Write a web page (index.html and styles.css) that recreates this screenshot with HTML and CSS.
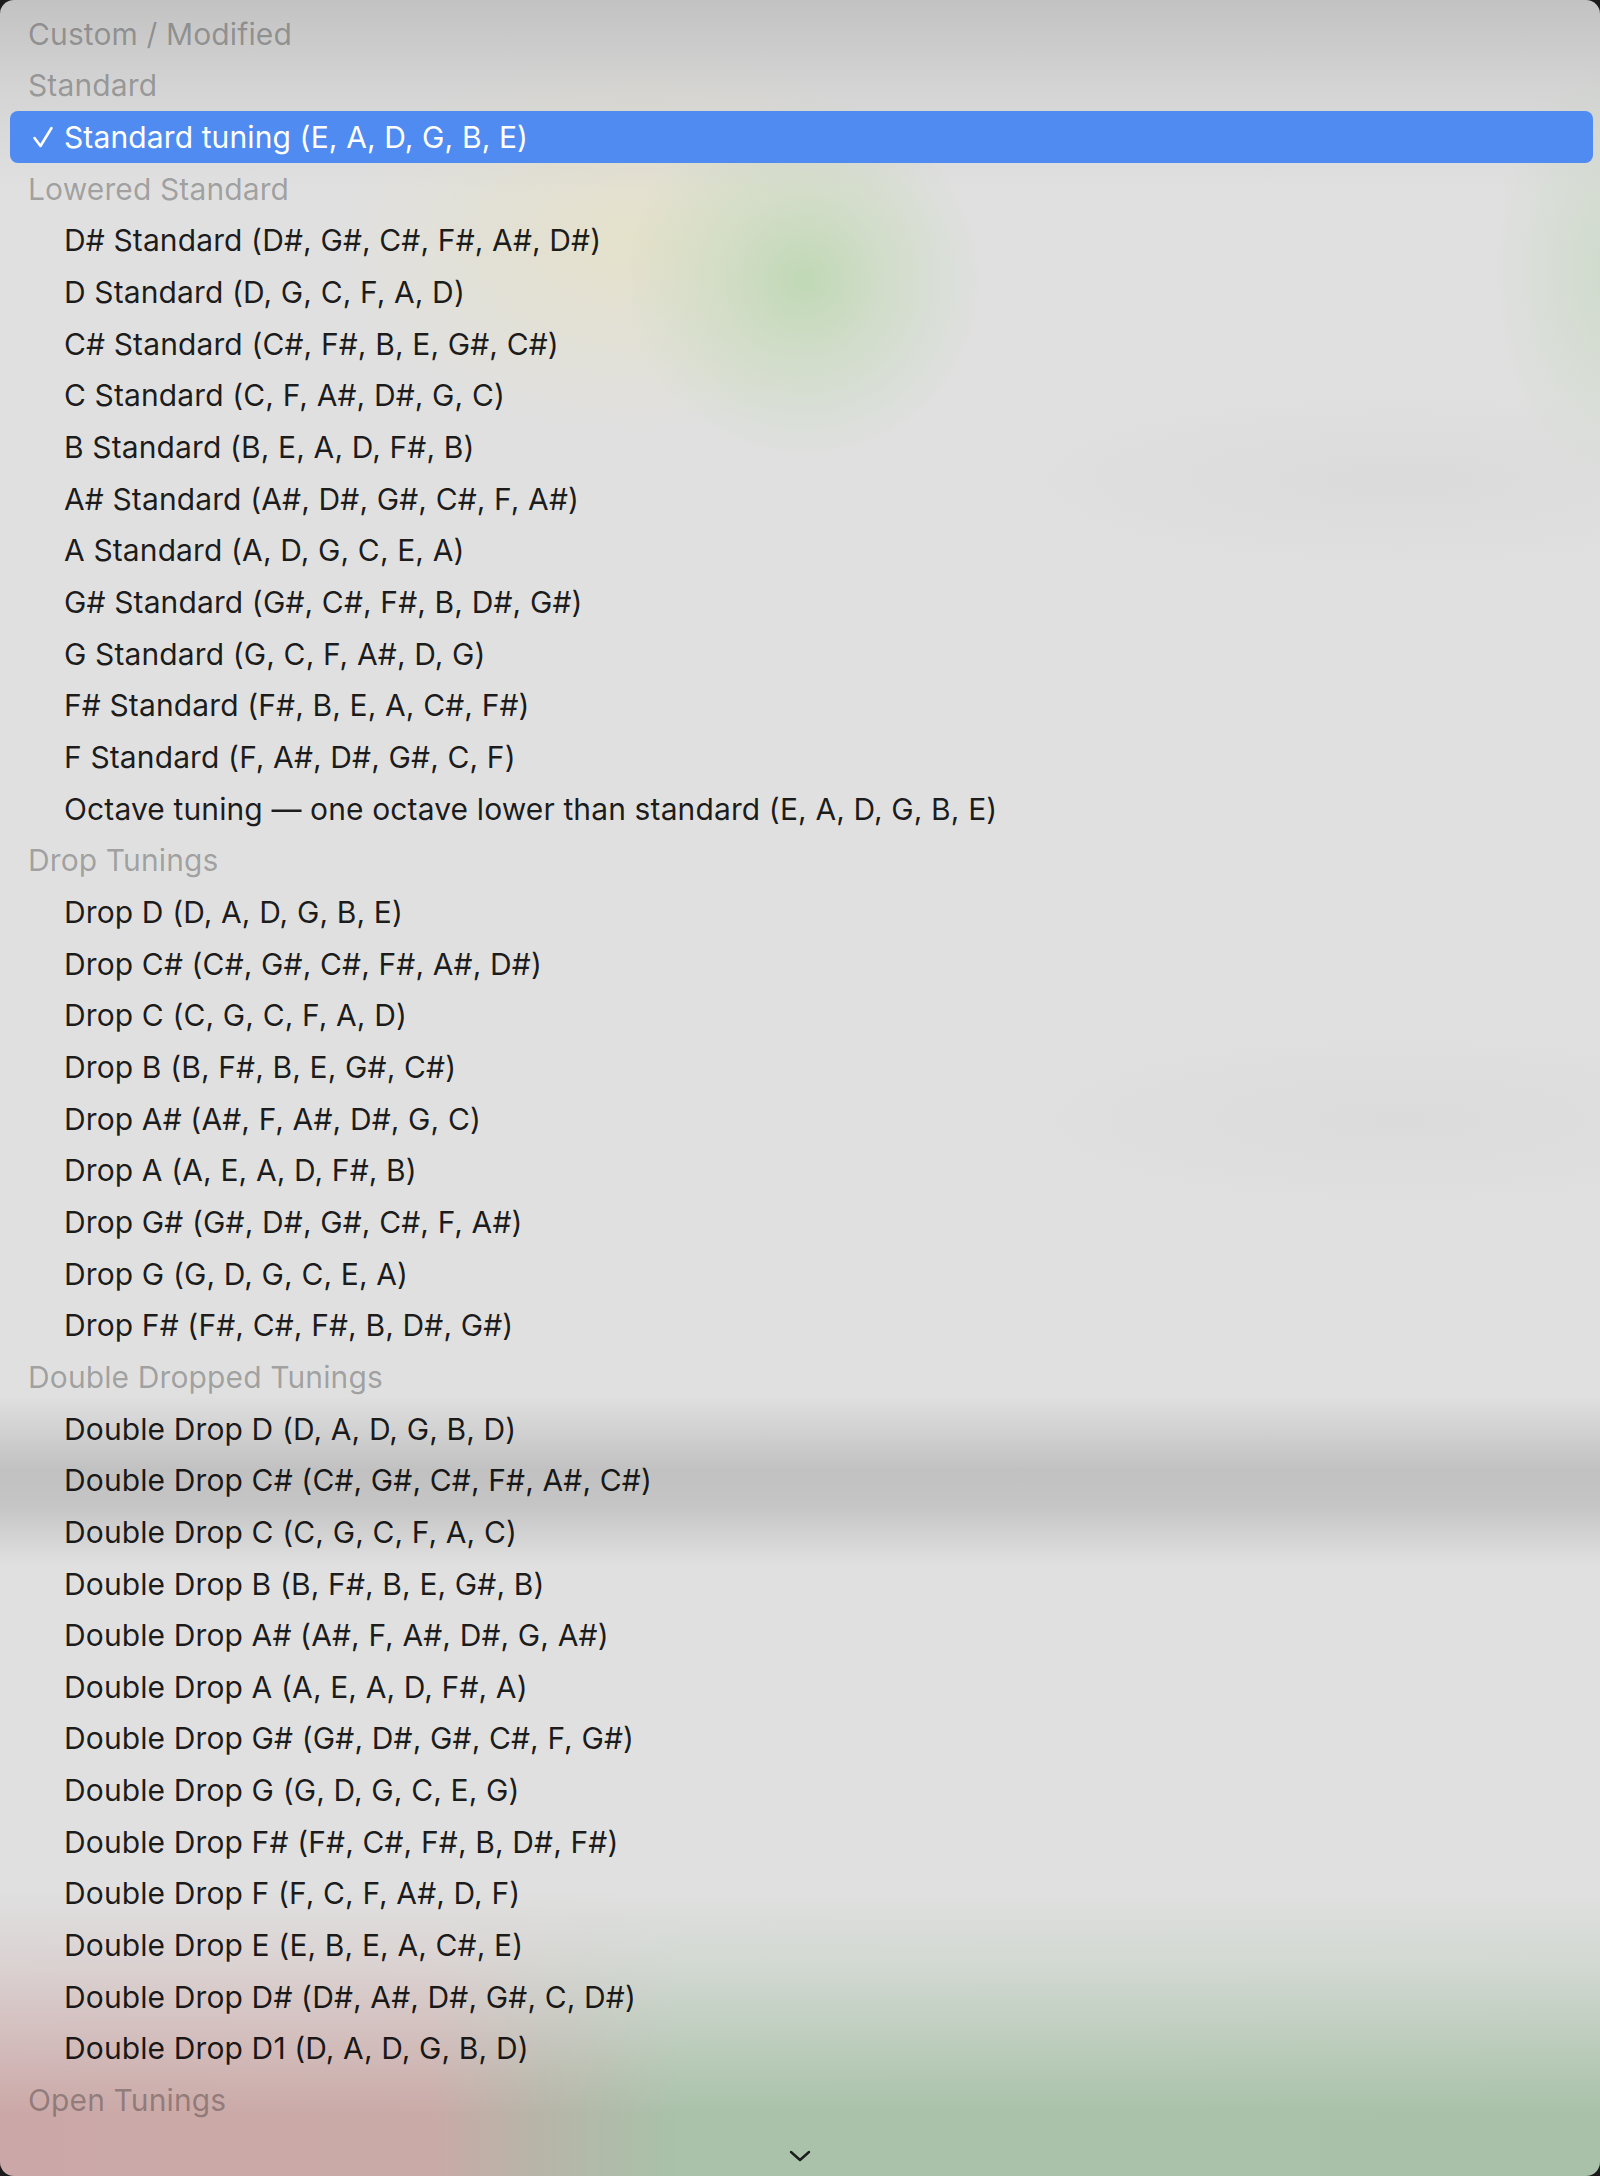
FILE: index.html
```html
<!DOCTYPE html>
<html lang="en">
<head>
<meta charset="utf-8">
<title>Tuning menu</title>
<link rel="stylesheet" href="styles.css">
</head>
<body>
<div class="menu">
  <ul class="list">
    <li class="row header">Custom / Modified</li>
    <li class="row header">Standard</li>
    <li class="row item selected"><span class="mark"><svg width="22" height="24" viewBox="0 0 22 24"><path d="M2.5 13 L8.5 21 L19.5 3" fill="none" stroke="#fff" stroke-width="2.6" stroke-linecap="round" stroke-linejoin="round"/></svg></span>Standard tuning (E, A, D, G, B, E)</li>
    <li class="row header">Lowered Standard</li>
    <li class="row item"><span class="mark"></span>D# Standard (D#, G#, C#, F#, A#, D#)</li>
    <li class="row item"><span class="mark"></span>D Standard (D, G, C, F, A, D)</li>
    <li class="row item"><span class="mark"></span>C# Standard (C#, F#, B, E, G#, C#)</li>
    <li class="row item"><span class="mark"></span>C Standard (C, F, A#, D#, G, C)</li>
    <li class="row item"><span class="mark"></span>B Standard (B, E, A, D, F#, B)</li>
    <li class="row item"><span class="mark"></span>A# Standard (A#, D#, G#, C#, F, A#)</li>
    <li class="row item"><span class="mark"></span>A Standard (A, D, G, C, E, A)</li>
    <li class="row item"><span class="mark"></span>G# Standard (G#, C#, F#, B, D#, G#)</li>
    <li class="row item"><span class="mark"></span>G Standard (G, C, F, A#, D, G)</li>
    <li class="row item"><span class="mark"></span>F# Standard (F#, B, E, A, C#, F#)</li>
    <li class="row item"><span class="mark"></span>F Standard (F, A#, D#, G#, C, F)</li>
    <li class="row item"><span class="mark"></span>Octave tuning — one octave lower than standard (E, A, D, G, B, E)</li>
    <li class="row header">Drop Tunings</li>
    <li class="row item"><span class="mark"></span>Drop D (D, A, D, G, B, E)</li>
    <li class="row item"><span class="mark"></span>Drop C# (C#, G#, C#, F#, A#, D#)</li>
    <li class="row item"><span class="mark"></span>Drop C (C, G, C, F, A, D)</li>
    <li class="row item"><span class="mark"></span>Drop B (B, F#, B, E, G#, C#)</li>
    <li class="row item"><span class="mark"></span>Drop A# (A#, F, A#, D#, G, C)</li>
    <li class="row item"><span class="mark"></span>Drop A (A, E, A, D, F#, B)</li>
    <li class="row item"><span class="mark"></span>Drop G# (G#, D#, G#, C#, F, A#)</li>
    <li class="row item"><span class="mark"></span>Drop G (G, D, G, C, E, A)</li>
    <li class="row item"><span class="mark"></span>Drop F# (F#, C#, F#, B, D#, G#)</li>
    <li class="row header">Double Dropped Tunings</li>
    <li class="row item"><span class="mark"></span>Double Drop D (D, A, D, G, B, D)</li>
    <li class="row item"><span class="mark"></span>Double Drop C# (C#, G#, C#, F#, A#, C#)</li>
    <li class="row item"><span class="mark"></span>Double Drop C (C, G, C, F, A, C)</li>
    <li class="row item"><span class="mark"></span>Double Drop B (B, F#, B, E, G#, B)</li>
    <li class="row item"><span class="mark"></span>Double Drop A# (A#, F, A#, D#, G, A#)</li>
    <li class="row item"><span class="mark"></span>Double Drop A (A, E, A, D, F#, A)</li>
    <li class="row item"><span class="mark"></span>Double Drop G# (G#, D#, G#, C#, F, G#)</li>
    <li class="row item"><span class="mark"></span>Double Drop G (G, D, G, C, E, G)</li>
    <li class="row item"><span class="mark"></span>Double Drop F# (F#, C#, F#, B, D#, F#)</li>
    <li class="row item"><span class="mark"></span>Double Drop F (F, C, F, A#, D, F)</li>
    <li class="row item"><span class="mark"></span>Double Drop E (E, B, E, A, C#, E)</li>
    <li class="row item"><span class="mark"></span>Double Drop D# (D#, A#, D#, G#, C, D#)</li>
    <li class="row item"><span class="mark"></span>Double Drop D1 (D, A, D, G, B, D)</li>
    <li class="row header">Open Tunings</li>
  </ul>
  <div class="scroll-arrow"><svg width="22" height="12" viewBox="0 0 22 12"><path d="M2 2 L11 10 L20 2" fill="none" stroke="#1c1c1c" stroke-width="2.4" stroke-linecap="round" stroke-linejoin="round"/></svg></div>
</div>
</body>
</html>
```
FILE: styles.css
```css
html, body {
  margin: 0;
  padding: 0;
  background: #1b1b1b;
}

.menu {
  width: 1600px;
  height: 2176px;
  box-sizing: border-box;
  border-radius: 14px;
  overflow: hidden;
  display: flex;
  flex-direction: column;
  font-family: Inter, "Liberation Sans", sans-serif;
  font-size: 30px;
  letter-spacing: 0.12px;
  background:
    linear-gradient(to bottom, rgba(170,170,170,0.55) 0, rgba(190,190,190,0.35) 90px, rgba(200,200,200,0) 190px),
    linear-gradient(to bottom, rgba(180,180,180,0) 1395px, rgba(180,180,180,0.7) 1470px, rgba(182,182,182,0.65) 1505px, rgba(182,182,182,0) 1565px),
    radial-gradient(circle at 805px 280px, rgba(190,216,180,0.95) 0, rgba(198,218,188,0.6) 75px, rgba(214,222,205,0) 180px),
    radial-gradient(ellipse 300px 190px at 640px 240px, rgba(229,225,200,0.9) 0, rgba(226,224,208,0) 100%),
    radial-gradient(ellipse 130px 220px at 1620px 270px, rgba(200,216,194,0.75) 0, rgba(210,220,205,0) 100%),
    radial-gradient(ellipse 400px 90px at 1400px 480px, rgba(212,212,212,0.45) 0, rgba(214,214,214,0) 100%),
    radial-gradient(ellipse 400px 90px at 1400px 1120px, rgba(212,212,212,0.4) 0, rgba(214,214,214,0) 100%),
    linear-gradient(to bottom, #e0e0e0 0, #e0e0e0 1890px, rgba(224,224,224,0.75) 1965px, rgba(224,224,224,0) 2115px),
    linear-gradient(to right, #cba8a7 0, #caaaa7 430px, #b7b5a8 540px, #a9c2a9 680px, #a8c1a8 1600px);
}

.list {
  list-style: none;
  margin: 0;
  padding: 8px 7px 0 10px;
}

.row {
  height: 51.66px;
  display: flex;
  align-items: center;
  white-space: nowrap;
  border-radius: 8px;
}

.header {
  padding-left: 18px;
  color: rgba(0, 0, 0, 0.3);
}

.item {
  padding-left: 18px;
  color: rgba(0, 0, 0, 0.88);
}

.mark {
  width: 36px;
  flex: none;
  display: flex;
  align-items: center;
  padding-left: 4px;
  box-sizing: border-box;
}

.selected {
  background: #4f8bf1;
  color: #ffffff;
}

.scroll-arrow {
  margin-top: auto;
  display: flex;
  justify-content: center;
  padding-bottom: 14px;
}
```
